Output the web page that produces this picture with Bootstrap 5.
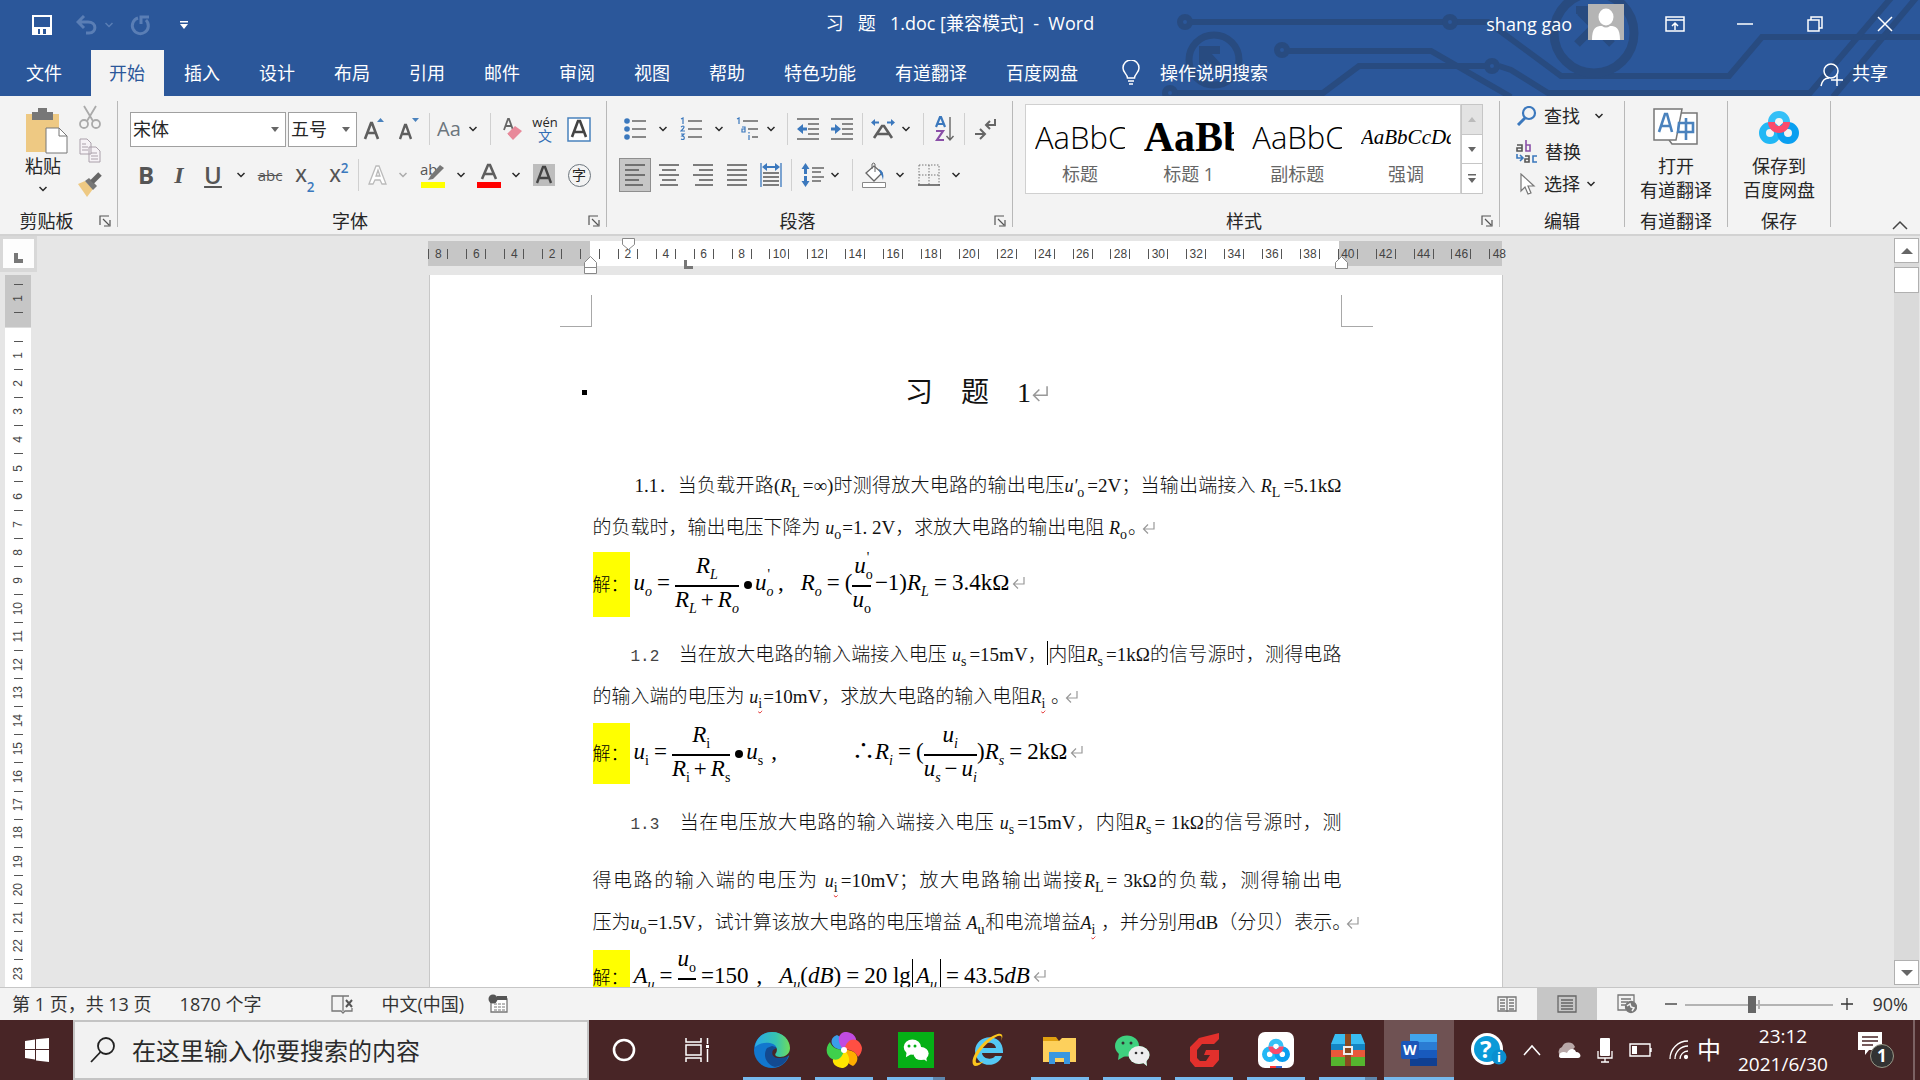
<!DOCTYPE html>
<html lang="zh-CN">
<head>
<meta charset="utf-8">
<meta name="viewport" content="width=device-width, initial-scale=1">
<title>习 题 1.doc [兼容模式] - Word</title>
<link rel="stylesheet" href="https://cdn.jsdelivr.net/npm/bootstrap@5.3.0/dist/css/bootstrap.min.css">
<style>
:root{--ui:"Open Sans","Noto Sans CJK SC",sans-serif;--blue:#2b579a;--ink:#262626}
body{font-family:var(--ui);font-size:18px;line-height:24px;color:var(--ink);background:#e6e6e6}
button,a.nav-link,select,input{font-family:inherit}
.plain{background:none;border:0;padding:0;color:inherit;display:inline-flex;align-items:center;justify-content:center}
svg{flex-shrink:0;display:block}
/* title and tabs */
.topbar{background:var(--blue);color:#fff;position:relative;height:96px}
.circuit{position:absolute;right:0;top:0;width:760px;height:96px}
.titlerow{height:50px;position:relative}
.titlerow>div{flex:1 1 0}
.qat>:first-child{margin-left:32px}
.doclabel{white-space:pre}
.winbtn{width:70px;height:48px}
.tabrow{height:46px;position:relative}
.tabrow .nav-link{color:#fff;font-size:18px;line-height:46px;padding:0 20px 0 19px;border-radius:0}
.tabrow .filetab{padding:0 29px 0 26px}
.tabrow .nav-link.active{background:#f3f3f3;color:var(--blue);padding:0 19px 0 18px;margin-right:1px}
/* ribbon */
.ribbon{height:140px;background:#f3f3f3;border-bottom:2px solid #d2d2d2;position:relative}
.vline{width:1px;background:#b8b8b8;margin:5px 0 7px}
.gfoot{height:26px;line-height:26px;margin-top:auto}
.gfoot .plain{width:24px}
.toolrow{display:grid;height:38px;align-items:center;justify-items:center}
.tick{width:1px;height:32px;background:#d0d0d0}
.g-clip{width:117px}.g-font{width:488px;padding-top:14px}.g-para{width:405px;padding-top:14px}
.g-style{width:486px}.g-edit{width:124px}.g-big{width:102px}
.pastebtn{width:78px}
.f1{margin-left:12px;grid-template-columns:158px 69px 32px 40px 1px 54px 13px 32px 32px 36px;justify-items:center}
.f2{margin:8px 0 0 12px;grid-template-columns:32px 34px 34px 22px 36px 34px 34px 5px 34px 16px 44px 12px 44px 10px 46px 24px}
.p1{margin-left:17px;grid-template-columns:22px 34px 22px 34px 22px 25px 8px 34px 34px 6px 36px 10px 25px 18px 21px 20px}
.p2{margin:8px 0 0 12px;grid-template-columns:32px 36px 32px 36px 32px 9px 32px 14px 21px 22px 30px 28px 26px}
.combo{height:35px;border:1px solid #a0a0a0;border-radius:0;padding:0 0 0 2px;font-size:18px;line-height:30px;appearance:none;color:var(--ink);background:#fff url("data:image/svg+xml,%3Csvg xmlns='http://www.w3.org/2000/svg' width='8' height='5'%3E%3Cpath d='M0 0h8L4 5z' fill='%23666'/%3E%3C/svg%3E") no-repeat right 6px center}
.combo.face{width:156px;justify-self:start}.combo.size{width:69px}
.gl{color:#555;line-height:1;font-weight:600}
.gl sub,.gl sup{color:#3b78bd}
.ital{font-family:"Liberation Serif",serif}
.struck{font-size:15px;color:#555}
.py1{font-size:13px;line-height:13px}.py2{font-size:14px;line-height:14px;color:#2f6db5}
.ringed{width:23px;height:23px;font-size:14px}
.pressed{width:32px;height:34px;background:#c6c6c6;border:1px solid #8e8e8e}
.gallery{height:90px;border:1px solid #d0d0d0;background:#fff;width:436px;padding:0 9px}
.gitem{width:90px;flex-direction:column;color:#666}
.preview{width:90px;height:50px;overflow:hidden;white-space:nowrap;color:#000;text-align:left;display:block;line-height:50px}
.pv-a{font-size:31px;font-weight:300}.pv-b{font:bold 42px/50px "Liberation Serif",serif}.pv-c{font:italic 21px/50px "Liberation Serif",serif}
.gscroll{width:22px;height:90px}.gscroll button{border:1px solid #c6c6c6;background:#fff;flex:1;margin-top:-1px}
.gscroll button:first-child{background:#e3e3e3;margin-top:0}
.editbtn{height:24px;gap:7px}
/* work area */
main{min-height:0;flex:1 1 0}
.leftcol{width:37px}
.corner{width:37px;height:36px;background:#d8d8d8;padding:3px}
.corner>div{background:#fdfdfd;width:31px;height:29px}
.vruler{width:26px;margin:3px 0 0 5px;font:12px/12px "Liberation Sans",sans-serif;color:#444}
.vr-top{background:#c6c6c6;height:53px;padding-top:9px;border-bottom:1px solid #ddd}
.vr-main{background:#fff;padding-top:13px}
.vcell{border-top:1px solid #555;width:9px;margin:0 auto;display:flex;align-items:center;justify-content:center;flex:1 1 0}
.vcell span{writing-mode:vertical-rl;transform:rotate(180deg)}
.vr-top .vcell{height:28px;flex:none}
.vr-top .vcell+.vcell{height:1px}
.sheet{width:1074px}
.hruler{height:39px;padding-top:5px;margin:0 -3px 0 -1px;position:relative}
.hband{height:25px;overflow:hidden;background:linear-gradient(90deg,#c6c6c6 0 162px,#fff 162px 911px,#c6c6c6 911px 1074px,#e6e6e6 1074px)}
.hcells{width:1099px;margin-left:-8px;height:26px;font:12px/10px "Liberation Sans",sans-serif;color:#444}
.hcells span{flex:1 1 0;display:flex;justify-content:center}
.hcells i{font-style:normal;width:20px;height:10px;border:solid #555;border-width:0 1px;text-align:center}
.stop{position:absolute}
.s-first{left:194px;top:2px}.s-left{left:156px;top:20px}.s-right{left:907px;top:20px}.s-tab{left:256px;top:24px}
.paper{background:#fff;border:1px solid #c8c8c8;border-width:0 1px;padding:0 160px 0 163px;overflow:hidden;font-family:"Liberation Serif","Noto Sans CJK SC",serif;font-size:19px;color:#111;font-weight:300}
.crops{margin:20px -31px 0 -33px}
.crop{width:32px;height:32px;border:solid #a8a8a8;border-width:0 1px 1px 0}
.crop.r{border-width:0 0 1px 1px}
.doctitle{font-size:28px;line-height:42px;margin:45px 0 51px;font-weight:400;position:relative;padding-left:20px;white-space:pre}
.doctitle::before{content:"";position:absolute;left:-11px;top:18px;width:5px;height:5px;background:#000}
.ln{margin:0;line-height:42px;height:42px;white-space:nowrap}
.jl{text-align:justify;text-align-last:justify}
.in1{padding-left:42px}.in2{padding-left:38px}
.mono{font-family:"Liberation Mono",monospace;font-size:16px;color:#444}
.ln sub,.eq sub,.eq sup{font-size:14px;font-style:normal}
.ln sub{bottom:-5px;margin-right:1px}
.jl sub{margin-right:3px}
.ln em{font-size:18px}
.ret{display:inline-block;vertical-align:-1px}
.ln .ret{margin-left:-5px}
.misspell{text-decoration:underline wavy #e02020 1px}
.caret{display:inline-block;width:1px;height:24px;background:#000;vertical-align:-4px}
.eq{font-size:23px;line-height:26px;color:#000;white-space:nowrap;font-weight:400}
.eq em{font-size:23px}
.eq sub{bottom:-6px}
.eq sub.it{font-style:italic}
.eq sup{margin-left:-6px;top:-11px}
.eqbody{gap:5px;padding:0 0 4px 4px}
.eqbody>.ret{margin-left:-2px}
.ans{background:#ff0;width:37px;font-size:18px;display:flex;align-items:center;font-weight:300}
.frac{display:flex;flex-direction:column;text-align:center}
.frac>span:first-child{border-bottom:2px solid #000;padding-bottom:6px}
.frac b{font-weight:400;margin:0 4px}
.eq1{height:65px;margin:3px 0 17px}.eq2{height:61px;margin:5px 0 18px}.eq3{height:56px;margin-top:6px}
.eqgap{width:53px}
.comma{margin:0 12px 0 3px}
.bars{border:solid #000;border-width:0 1px;padding:4px 3px;margin-left:-4px}
.bull{width:8px;height:8px;border-radius:50%;background:#000;margin:4px -2px 0 0}
.scroller{width:26px;padding:2px 2px 2px 0}
.scroller .sb{width:25px;height:25px;background:#fff;border:1px solid #b0b0b0}
.track{background:#dadada;width:25px}
.thumb{width:25px;height:26px;background:#fff;border:1px solid #b0b0b0;margin-top:4px}
/* status bar */
.status{height:33px;background:#f3f3f3;border-top:1px solid #c6c6c6;color:#333}
.viewbtn{width:60px;height:32px}
.viewbtn.on{background:#c6c6c6}
.zoomer{appearance:none;width:148px;height:17px;margin:0 8px;background:linear-gradient(#b3b3b3,#b3b3b3) 0 8px/100% 2px no-repeat,linear-gradient(#b3b3b3,#b3b3b3) 50% 4px/2px 9px no-repeat}
.zoomer::-webkit-slider-thumb{appearance:none;width:8px;height:17px;background:#666;border:0;border-radius:0}
/* taskbar */
.taskbar{height:60px;background:#482526;color:#fff}
.startbtn{width:73px}
.cortana{width:70px}.taskview{width:77px}
.tsearch{width:516px;border:2px solid #c4c4c4;background:#f2f2f2;padding-left:15px;gap:16px}
.tsearch input{border:0;background:none;font-size:24px;color:#222;outline:0;padding:0;flex:1}
.tsearch input::placeholder{color:#2b2b2b;opacity:1}
.app{width:72px;padding:0 7px}
.app>span{width:58px;height:60px;display:flex;align-items:center;justify-content:center;border-bottom:3px solid transparent;padding-top:3px}
.app.run>span{border-bottom-color:#76b9ed}
.app.multi>span{border-image:linear-gradient(90deg,#76b9ed 44px,#5e86ac 44px) 3}
.app.cur{background:#6f5253;padding:0;width:70px}
.app.cur>span{width:70px}
.clock{width:116px;font-size:19px;line-height:28px;text-align:center}
.showdesk{width:7px;border-left:2px solid #7c6263}
</style>
</head>
<body class="vh-100 d-flex flex-column overflow-hidden">
<svg width="0" height="0" class="position-absolute">
<symbol id="chev" viewBox="0 0 8 6"><path d="M.5 1 4 4.500 7.500 1" fill="none" stroke="currentColor" stroke-width="1.500"/></symbol>
<symbol id="launch" viewBox="0 0 12 12"><path d="M1 10V1h9M4 4l6 6M11 5v6H5" fill="none" stroke="#555" stroke-width="1.200"/></symbol>
<symbol id="ret" viewBox="0 0 13 14"><path d="M12 1v7H1.500M6 3.500 1.500 8 6 12.500" fill="none" stroke="#999" stroke-width="1.200"/></symbol>
<symbol id="pan" viewBox="0 0 40 34"><g fill="none" stroke-width="7"><circle cx="11" cy="23" r="7.500" stroke="#22b8f5"/><circle cx="29" cy="23" r="7.500" stroke="#0a9ff0"/><path d="M12.500 12a7.500 7.500 0 0 1 15 0" stroke="#35c0f7"/><path d="M12.500 12a7.500 7.500 0 0 0 15 0" stroke="#fb4a6b"/></g></symbol>
<symbol id="bubbles" viewBox="0 0 36 36"><ellipse cx="13" cy="14" rx="12" ry="10.500"/><path d="M5 21 4 28l7-4z"/><ellipse cx="25" cy="23" rx="10.500" ry="9"/><path d="M28 30l5 4-1-7z"/></symbol>
</svg>

<header class="topbar flex-shrink-0">
<svg class="circuit" viewBox="1160 0 760 96" fill="none" stroke="#284b80" stroke-width="6">
<circle cx="1185" cy="22" r="5"/><path d="M1191 22H1444M1457 22H1488l73 54h168l33-39H1920"/><circle cx="1450" cy="22" r="5"/>
<circle cx="1282" cy="50" r="5"/><path d="M1289 51H1431l80 46"/><circle cx="1492" cy="66" r="5"/><path d="M1176 93h147l36-27h127M1499 66l12 4 37 23h262L1891-2M1833 97 1916-2"/><circle cx="1170" cy="93" r="5"/>
<circle cx="1594" cy="33" r="40" stroke-width="9"/><circle cx="1214" cy="60" r="25" stroke-width="7"/>
<path d="M1203 65V50h17M1202 49l18 20M1576 10h25M1612 44 1580 12M1577 44l14-14" stroke-width="8"/></svg>
<div class="titlerow d-flex align-items-start">
<div class="qat d-flex align-items-center h-100">
<button class="plain" aria-label="保存"><svg width="20" height="20"><path d="M1 1h18v18H1z" fill="none" stroke="#fff" stroke-width="2"/><path d="M2 12h16v7H2z" fill="#fff"/><path d="M6 14h8v5H6z" fill="#2b579a"/><path d="M8 14h3v5H8z" fill="#fff"/></svg></button>
<button class="plain ms-4" aria-label="撤消"><svg width="21" height="20" fill="none" stroke="#5a7eb5" stroke-width="3"><path d="M8 1 2 7l6 6M2 7h10c9 0 9 11 1 11h-3"/></svg></button>
<svg width="8" height="6" class="ms-2" color="#5a7eb5"><use href="#chev"/></svg>
<button class="plain ms-3" aria-label="恢复"><svg width="22" height="22" fill="none" stroke="#5a7eb5" stroke-width="3"><path d="M9 4a8 8 0 1 0 8 2M12 10V3h8"/></svg></button>
<button class="plain ms-4 ps-1" aria-label="自定义快速访问工具栏"><svg width="10" height="10" fill="#fff"><path d="M1 1h8v1.500H1zM1 4h8L5 9z"/></svg></button>
</div>
<span class="doclabel h-100 d-flex align-items-center pb-1">习   题   1.doc [兼容模式]  -  Word</span>
<div class="d-flex justify-content-end">
<span class="pt-2 mt-1 me-3">shang gao</span>
<svg width="36" height="36" class="mt-1 me-3" viewBox="0 0 36 36"><path fill="#b4b4b4" d="M0 0h36v36H0z"/><ellipse cx="18" cy="13" rx="7.500" ry="8.500" fill="#fff"/><path d="M4 36c0-12 4-14 10-14q4 3 8 0c6 0 10 2 10 14z" fill="#fff"/></svg>
<button class="plain winbtn" aria-label="功能区显示选项"><svg width="20" height="17" fill="none" stroke="#fff" stroke-width="1.500"><path d="M1 1h18v14H1zM1 4h18M10 14V7M7 10l3-3 3 3"/></svg></button>
<button class="plain winbtn" aria-label="最小化"><svg width="16" height="4"><path d="M0 2h16" stroke="#fff" stroke-width="1.500"/></svg></button>
<button class="plain winbtn" aria-label="向下还原"><svg width="16" height="16" fill="none" stroke="#fff" stroke-width="1.500"><path d="M1 4h11v11H1zM4 4V1h11v11h-3"/></svg></button>
<button class="plain winbtn" aria-label="关闭"><svg width="16" height="16"><path d="m1 1 14 14M15 1 1 15" stroke="#fff" stroke-width="1.500"/></svg></button>
</div>
</div>
<nav class="tabrow d-flex align-items-stretch">
<ul class="nav flex-nowrap text-nowrap">
<li><a class="nav-link filetab" href="#">文件</a></li><li><a class="nav-link active" href="#">开始</a></li><li><a class="nav-link" href="#">插入</a></li><li><a class="nav-link" href="#">设计</a></li><li><a class="nav-link" href="#">布局</a></li><li><a class="nav-link" href="#">引用</a></li><li><a class="nav-link" href="#">邮件</a></li><li><a class="nav-link" href="#">审阅</a></li><li><a class="nav-link" href="#">视图</a></li><li><a class="nav-link" href="#">帮助</a></li><li><a class="nav-link" href="#">特色功能</a></li><li><a class="nav-link" href="#">有道翻译</a></li><li><a class="nav-link" href="#">百度网盘</a></li>
</ul>
<button class="plain ms-4"><svg width="18" height="26" fill="none" stroke="#fff" stroke-width="1.500" class="me-3"><path d="M5.500 18c0-4-4.500-5-4.500-10a8 8 0 0 1 16 0c0 5-4.500 6-4.500 10zM6 21h6M7 24h4"/></svg><span class="ms-1">操作说明搜索</span></button>
<button class="plain ms-auto me-4 pe-2"><svg width="24" height="24" fill="none" stroke="#fff" stroke-width="1.500" class="mt-1"><circle cx="11" cy="8" r="7"/><path d="M1 23c1-5 4-8 8-8M17 12v11M11 17h12"/></svg><span class="ms-2">共享</span></button>
</nav>
</header>

<section class="ribbon d-flex flex-shrink-0" aria-label="功能区">
<div class="g-clip d-flex flex-column">
<div class="d-flex pt-2">
<button class="plain pastebtn flex-column justify-content-start"><svg width="42" height="46" class="mt-1 ms-3" viewBox="0 0 42 46"><path d="M0 6h33v38H0z" fill="#eec983"/><path d="M6 4h6V0h9v4h6v8H6z" fill="#777"/><path d="M20 20h13l8 8v17H20z" fill="#fff" stroke="#777"/><path d="M33 20v8h8" fill="none" stroke="#777"/></svg><span class="ms-2">粘贴</span><svg width="8" height="6" class="mt-2 ms-2"><use href="#chev"/></svg></button>
<div class="d-flex flex-column gap-2">
<button class="plain" aria-label="剪切"><svg width="22" height="26" viewBox="0 0 22 26" fill="none" stroke="#aaa" stroke-width="1.800"><path d="m5 2 9 15M17 2 8 17"/><circle cx="5" cy="20" r="4"/><circle cx="17" cy="20" r="4"/></svg></button>
<button class="plain" aria-label="复制"><svg width="22" height="26" viewBox="0 0 22 26" fill="#f6f2f6" stroke="#aaa0aa"><path d="M1 1h7l4 4v11H1zM10 9h7l4 4v11H10z"/><path d="M3 6h4M3 9h6M3 12h6M12 15h6M12 18h7M12 21h7"/></svg></button>
<button class="plain" aria-label="格式刷"><svg width="24" height="26" viewBox="0 0 24 26"><path d="m0 12 7-3 8 8-6 8z" fill="#eec983"/><path d="m7 9 4-3 8 8-4 4z" fill="#777"/><path d="m14 10 8-8" stroke="#666" stroke-width="5"/></svg></button>
</div></div>
<div class="gfoot d-flex"><span class="flex-fill text-center">剪贴板</span><button class="plain" aria-label="剪贴板选项"><svg width="12" height="12"><use href="#launch"/></svg></button></div>
</div>
<div class="vline"></div>
<div class="g-font d-flex flex-column">
<div class="toolrow f1">
<select class="combo face" aria-label="字体"><option>宋体</option></select>
<select class="combo size" aria-label="字号"><option>五号</option></select>
<button class="plain gl" aria-label="增大字号"><svg width="22" height="24"><path d="m3 22 6-16h1l6 16M5 16h9" fill="none" stroke="#5e5e5e" stroke-width="2.600"/><path d="M15 5h7l-3.500-4z" fill="#4a82bd"/></svg></button>
<button class="plain gl" aria-label="减小字号"><svg width="20" height="24"><path d="m1 22 5-14h1l5 14M3 17h8" fill="none" stroke="#5e5e5e" stroke-width="2.400"/><path d="M13 1h7l-3.500 4z" fill="#4a82bd"/></svg></button>
<span class="tick"></span>
<button class="plain gap-2" aria-label="更改大小写"><span class="text-secondary fs-5">Aa</span><svg width="8" height="6"><use href="#chev"/></svg></button>
<span class="tick"></span>
<button class="plain" aria-label="清除格式"><svg width="20" height="24"><path d="m1 13 4-11h1l4 11M3 9h6" fill="none" stroke="#666" stroke-width="1.800"/><path d="m4 17 8-8 7 5-9 9z" fill="#e8899a"/><path d="m4 17 5 6" stroke="#f3f3f3"/></svg></button>
<button class="plain flex-column" aria-label="拼音指南"><span class="py1">wén</span><span class="py2">文</span></button>
<button class="plain" aria-label="字符边框"><svg width="24" height="25"><path d="M1 1h22v23H1z" fill="#fff" stroke="#4a82bd" stroke-width="1.500"/><path d="m5 20 6-16h2l6 16M8 15h8" fill="none" stroke="#444" stroke-width="2.600"/></svg></button>
</div>
<div class="toolrow f2">
<button class="plain gl fw-bold fs-4">B</button>
<button class="plain gl fs-4 fst-italic ital">I</button>
<button class="plain gl fs-4 text-decoration-underline">U</button>
<svg width="8" height="6"><use href="#chev"/></svg>
<button class="plain text-decoration-line-through struck">abc</button>
<button class="plain gl align-items-end">X<sub>2</sub></button>
<button class="plain gl">X<sup>2</sup></button>
<span class="tick"></span>
<button class="plain" aria-label="文本效果"><svg width="20" height="22"><path d="m1 20 7-18h3l7 18h-4l-2-4H7l-2 4zM8 12h4l-2-6z" fill="#fff" stroke="#bbb" stroke-width="1.300"/></svg></button>
<svg width="8" height="6" color="#aaa"><use href="#chev"/></svg>
<button class="plain flex-column" aria-label="突出显示"><svg width="26" height="26"><text x="0" y="13" font-size="15" fill="#555">ab</text><path d="m8 18 3-5 9-10 4 3-11 11z" fill="#777"/><path d="M1 20h24v6H1z" fill="#ff0"/></svg></button>
<svg width="8" height="6"><use href="#chev"/></svg>
<button class="plain" aria-label="字体颜色"><svg width="24" height="26"><path d="m5 17 6-14h2l6 14M8 12h8" fill="none" stroke="#5e5e5e" stroke-width="2.600"/><path d="M0 20h24v6H0z" fill="red"/></svg></button>
<svg width="8" height="6"><use href="#chev"/></svg>
<button class="plain" aria-label="字符底纹"><svg width="22" height="22"><path d="M0 0h22v22H0z" fill="#bdbdbd"/><path d="m4 19 6-16h2l6 16M7 14h8" fill="none" stroke="#444" stroke-width="2.400"/></svg></button>
<button class="plain rounded-circle border border-secondary ringed" aria-label="带圈字符">字</button>
</div>
<div class="gfoot d-flex"><span class="flex-fill text-center">字体</span><button class="plain" aria-label="字体选项"><svg width="12" height="12"><use href="#launch"/></svg></button></div>
</div>
<div class="vline"></div>
<div class="g-para d-flex flex-column">
<div class="toolrow p1">
<button class="plain" aria-label="项目符号"><svg width="22" height="22"><g fill="#3b78bd"><circle cx="3" cy="3" r="2.800"/><circle cx="3" cy="11" r="2.800"/><circle cx="3" cy="19" r="2.800"/></g><path d="M8 3h14M8 11h14M8 19h14" stroke="#666" stroke-width="1.300"/></svg></button>
<svg width="8" height="6"><use href="#chev"/></svg>
<button class="plain" aria-label="编号"><svg width="22" height="24"><g fill="none" stroke="#3b78bd" stroke-width="1.200"><path d="M1 2l2-1v6M1 10q3-2 3 0 0 1-3 4h4M1 17h3l-2 2q3 0 2 3-1 1-3 0"/></g><path d="M8 4h14M8 12h14M8 20h14" stroke="#666" stroke-width="1.300"/></svg></button>
<svg width="8" height="6"><use href="#chev"/></svg>
<button class="plain" aria-label="多级列表"><svg width="22" height="24"><g fill="none" stroke="#3b78bd" stroke-width="1.200"><path d="M1 2l2-1v6M6 10h3v5H6v-3h3M13 18v5M13 15v1.500"/></g><path d="M7 4h15M12 12h10M16 20h6" stroke="#666" stroke-width="1.300"/></svg></button>
<svg width="8" height="6"><use href="#chev"/></svg>
<span class="tick"></span>
<button class="plain" aria-label="减少缩进量"><svg width="22" height="22"><path d="M0 1h22M11 6h11M11 11h11M11 16h11M0 21h22" stroke="#666" stroke-width="1.300"/><path d="M0 11 6 6v3.500h4v3H6V16z" fill="#3b78bd"/></svg></button>
<button class="plain" aria-label="增加缩进量"><svg width="22" height="22"><path d="M0 1h22M11 6h11M11 11h11M11 16h11M0 21h22" stroke="#666" stroke-width="1.300"/><path d="M10 11 4 6v3.500H0v3h4V16z" fill="#3b78bd"/></svg></button>
<span class="tick"></span>
<button class="plain" aria-label="中文版式"><svg width="24" height="20"><path d="m3 19 8-12h2l8 12M6 15h12" fill="none" stroke="#5e5e5e" stroke-width="2.600"/><path d="M0 3.500 4 0v2.500h4v2H4V7zM24 3.500 20 0v2.500h-4v2h4V7z" fill="#3b78bd"/></svg></button>
<svg width="8" height="6"><use href="#chev"/></svg>
<span class="tick"></span>
<button class="plain" aria-label="排序"><svg width="20" height="26" fill="none"><path d="m1 11 4-10h1l4 10M3 8h5" stroke="#3b78bd" stroke-width="2.200"/><path d="M1 15h7L2 24h7" stroke="#8a4fa8" stroke-width="2.200"/><path d="M15 1v22M11.500 20l3.500 4 3.500-4" stroke="#666" stroke-width="1.400"/></svg></button>
<span class="tick"></span>
<button class="plain" aria-label="显示编辑标记"><svg width="21" height="22" fill="none" stroke="#666" stroke-width="2"><path d="M20 1v6h-8M15 3l-4 4 4 4M0 16h9M5 11l5 5-5 5"/></svg></button>
</div>
<div class="toolrow p2">
<button class="plain pressed" aria-label="左对齐"><svg width="20" height="22"><path d="M0 1h20M0 6h14M0 11h20M0 16h14M0 21h18" stroke="#555" stroke-width="1.300"/></svg></button>
<button class="plain" aria-label="居中"><svg width="20" height="22"><path d="M0 1h20M3 6h14M0 11h20M3 16h14M1 21h18" stroke="#555" stroke-width="1.300"/></svg></button>
<button class="plain" aria-label="右对齐"><svg width="20" height="22"><path d="M0 1h20M6 6h14M0 11h20M6 16h14M2 21h18" stroke="#555" stroke-width="1.300"/></svg></button>
<button class="plain" aria-label="两端对齐"><svg width="20" height="22"><path d="M0 1h20M0 6h20M0 11h20M0 16h20M0 21h20" stroke="#555" stroke-width="1.300"/></svg></button>
<button class="plain" aria-label="分散对齐"><svg width="22" height="24"><path d="M3 10h16M3 14h16M3 18h16M3 22h16" stroke="#555" stroke-width="1.300"/><path d="M1 0v24M21 0v24" stroke="#3b78bd" stroke-width="1.300"/><path d="m2 4 5-4v3h8V0l5 4-5 4V5H7v3z" fill="#3b78bd"/></svg></button>
<span class="tick"></span>
<button class="plain" aria-label="行距"><svg width="23" height="24"><path d="m4.500 0 4 6H6v5H3V6H.500zM4.500 24l4-6H6v-5H3v5H.500z" fill="#3b78bd"/><path d="M11 5h12M11 9h9M11 14h12M11 18h9" stroke="#666" stroke-width="1.300"/></svg></button>
<svg width="8" height="6"><use href="#chev"/></svg>
<span class="tick"></span>
<button class="plain" aria-label="底纹"><svg width="24" height="26"><path d="m4 11 8-7 8 7-8 8z" fill="#fff" stroke="#666" stroke-width="1.300"/><path d="M10 7V2q2-2 3 0v8" fill="none" stroke="#666"/><path d="M17 7q6 3 4 11-1-5-3-7z" fill="#3b78bd"/><path d="M.500 20.500h23v5H.500z" fill="#fff" stroke="#888"/></svg></button>
<svg width="8" height="6"><use href="#chev"/></svg>
<button class="plain" aria-label="边框"><svg width="22" height="22"><path d="M1 1h20v20M1 1v20M11 1v20M1 11h20" fill="none" stroke="#777" stroke-dasharray="1.500 1.500"/><path d="M0 21h22" stroke="#555" stroke-width="1.500"/></svg></button>
<svg width="8" height="6"><use href="#chev"/></svg>
</div>
<div class="gfoot d-flex"><span class="flex-fill text-center">段落</span><button class="plain" aria-label="段落选项"><svg width="12" height="12"><use href="#launch"/></svg></button></div>
</div>
<div class="vline"></div>
<div class="g-style d-flex flex-column">
<div class="d-flex pt-2 ps-2 ms-1">
<div class="gallery d-flex justify-content-between">
<button class="plain gitem"><span class="preview pv-a">AaBbC</span>标题</button>
<button class="plain gitem"><span class="preview pv-b">AaBb</span>标题 1</button>
<button class="plain gitem"><span class="preview pv-a">AaBbC</span>副标题</button>
<button class="plain gitem"><span class="preview pv-c">AaBbCcDd</span>强调</button>
</div>
<div class="gscroll d-flex flex-column">
<button class="plain" aria-label="上一行"><svg width="8" height="5"><path d="M0 5h8L4 0z" fill="#bbb"/></svg></button>
<button class="plain" aria-label="下一行"><svg width="8" height="5"><path d="M0 0h8L4 5z" fill="#666"/></svg></button>
<button class="plain" aria-label="其他"><svg width="8" height="9"><path d="M0 0h8v1.500H0zM0 4h8L4 9z" fill="#666"/></svg></button>
</div></div>
<div class="gfoot d-flex"><span class="flex-fill text-center">样式</span><button class="plain" aria-label="样式选项"><svg width="12" height="12"><use href="#launch"/></svg></button></div>
</div>
<div class="vline"></div>
<div class="g-edit d-flex flex-column">
<div class="d-flex flex-column align-items-start ps-3 pt-2 gap-2">
<button class="plain editbtn"><svg width="21" height="20" fill="none" stroke="#3b78bd" stroke-width="2.200"><circle cx="13" cy="7" r="6"/><path d="m9 12-7 7" stroke-width="3"/></svg>查找<svg width="8" height="6" class="ms-2"><use href="#chev"/></svg></button>
<button class="plain editbtn mt-1"><svg width="22" height="24" fill="none" stroke="#555" stroke-width="1.600"><path d="M1 5h5v6H1V8h5"/><path d="M10 0v11h4V5h-4" stroke="#8a4fa8"/><path d="M9 16h4v6H9v-3h4"/><path d="M21 16h-4v6h4" stroke="#3b78bd"/><path d="M1 14v4h5M4 15l3 3-3 3" stroke="#3b78bd"/></svg>替换</button>
<button class="plain editbtn"><svg width="21" height="22"><path d="M5 1v17l4-4 3 7 3-1-3-7h6z" fill="#fff" stroke="#777" stroke-width="1.200"/></svg>选择<svg width="8" height="6"><use href="#chev"/></svg></button>
</div>
<span class="gfoot text-center">编辑</span>
</div>
<div class="vline"></div>
<div class="g-big d-flex flex-column">
<button class="plain flex-column pt-2"><svg width="46" height="38" class="mt-1 mb-2" viewBox="0 0 46 38"><path d="M24 5h20v31H19l-3-4" fill="#fff" stroke="#777" stroke-width="1.500"/><path d="M1 1h28l-6 31H1z" fill="#fff" stroke="#777" stroke-width="1.500"/><path d="m6 24 6-18h2l5 18M8 18h9M26 15h14v9H25zM33 10v22" fill="none" stroke="#4a82bd" stroke-width="2.600"/></svg><span>打开<br>有道翻译</span></button>
<span class="gfoot text-center">有道翻译</span>
</div>
<div class="vline"></div>
<div class="g-big d-flex flex-column">
<button class="plain flex-column pt-2"><svg width="40" height="38" class="mt-1 mb-2"><use href="#pan"/></svg><span>保存到<br>百度网盘</span></button>
<span class="gfoot text-center">保存</span>
</div>
<div class="vline"></div>
<button class="plain ms-auto align-self-end me-2 pe-1 pb-1" aria-label="折叠功能区"><svg width="16" height="10"><path d="m1 9 7-7 7 7" fill="none" stroke="#444" stroke-width="1.500"/></svg></button>
</section>

<main class="d-flex overflow-hidden">
<div class="leftcol d-flex flex-column">
<div class="corner"><div class="d-flex align-items-center justify-content-center pt-2"><svg width="9" height="10"><path d="M0 0h4v6h5v4H0z" fill="#777"/></svg></div></div>
<div class="vruler d-flex flex-column flex-fill">
<div class="vr-top"><div class="vcell"><span>1</span></div><div class="vcell"></div></div>
<div class="vr-main d-flex flex-column flex-fill">
<div class="vcell"><span>1</span></div><div class="vcell"><span>2</span></div><div class="vcell"><span>3</span></div><div class="vcell"><span>4</span></div><div class="vcell"><span>5</span></div><div class="vcell"><span>6</span></div><div class="vcell"><span>7</span></div><div class="vcell"><span>8</span></div><div class="vcell"><span>9</span></div><div class="vcell"><span>10</span></div><div class="vcell"><span>11</span></div><div class="vcell"><span>12</span></div><div class="vcell"><span>13</span></div><div class="vcell"><span>14</span></div><div class="vcell"><span>15</span></div><div class="vcell"><span>16</span></div><div class="vcell"><span>17</span></div><div class="vcell"><span>18</span></div><div class="vcell"><span>19</span></div><div class="vcell"><span>20</span></div><div class="vcell"><span>21</span></div><div class="vcell"><span>22</span></div><div class="vcell"><span>23</span></div>
</div></div></div>
<div class="flex-fill d-flex justify-content-center">
<div class="sheet d-flex flex-column">
<div class="hruler flex-shrink-0">
<div class="hband"><div class="hcells d-flex align-items-center"><span><i>8</i></span><span><i>6</i></span><span><i>4</i></span><span><i>2</i></span><span><i></i></span><span><i>2</i></span><span><i>4</i></span><span><i>6</i></span><span><i>8</i></span><span><i>10</i></span><span><i>12</i></span><span><i>14</i></span><span><i>16</i></span><span><i>18</i></span><span><i>20</i></span><span><i>22</i></span><span><i>24</i></span><span><i>26</i></span><span><i>28</i></span><span><i>30</i></span><span><i>32</i></span><span><i>34</i></span><span><i>36</i></span><span><i>38</i></span><span><i>40</i></span><span><i>42</i></span><span><i>44</i></span><span><i>46</i></span><span><i>48</i></span></div></div>
<svg class="stop s-first" width="13" height="12"><path d="M.500.500h12v6l-6 5-6-5z" fill="#fff" stroke="#888"/></svg>
<svg class="stop s-left" width="13" height="19"><path d="M.500 6.500l6-6 6 6v11H.500zM.500 11.500h12" fill="#fff" stroke="#888"/></svg>
<svg class="stop s-right" width="13" height="13"><path d="M.500 6.500l6-6 6 6v6H.500z" fill="#fff" stroke="#888"/></svg>
<svg class="stop s-tab" width="9" height="9"><path d="M0 0h3v6h6v3H0z" fill="#777"/></svg>
</div>
<article class="paper flex-fill">
<div class="crops d-flex justify-content-between"><div class="crop"></div><div class="crop r"></div></div>
<h1 class="doctitle text-center">习　题　1<svg class="ret" width="18" height="18"><use href="#ret"/></svg></h1>
<p class="ln jl in1">1.1．当负载开路(<em>R</em><sub>L</sub>=∞)时测得放大电路的输出电压<em>u'</em><sub>o</sub>=2V；当输出端接入 <em>R</em><sub>L</sub>=5.1kΩ</p>
<p class="ln">的负载时，输出电压下降为 <em>u</em><sub>o</sub>=1. 2V，求放大电路的输出电阻 <em>R</em><sub>o</sub>。<svg class="ret" width="13" height="14"><use href="#ret"/></svg></p>
<div class="eq eq1 d-flex"><span class="ans">解：</span><div class="eqbody d-flex align-items-center">
<span><em>u</em><sub class="it">o</sub></span><span>=</span><span class="frac"><span><em>R</em><sub class="it">L</sub></span><span><em>R</em><sub class="it">L</sub><b>+</b><em>R</em><sub class="it">o</sub></span></span><span class="bull"></span><span><em>u</em><sub class="it">o</sub><sup>'</sup></span><span class="comma">,</span><span><em>R</em><sub class="it">o</sub></span><span>=</span><span class="d-flex align-items-center">(<span class="frac"><span><em>u</em><sub>o</sub><sup>'</sup></span><span><em>u</em><sub>o</sub></span></span><span class="ms-1">−1)<em>R</em><sub class="it">L</sub></span></span><span>=</span><span>3.4kΩ</span><svg class="ret" width="13" height="14"><use href="#ret"/></svg></div></div>
<p class="ln jl in2"><span class="mono">1.2</span>　当在放大电路的输入端接入电压 <em>u</em><sub>s</sub>=15mV，<span class="caret"></span>内阻<em>R</em><sub>s</sub>=1kΩ的信号源时，测得电路</p>
<p class="ln">的输入端的电压为 <em>u</em><sub class="misspell">i</sub>=10mV，求放大电路的输入电阻<em>R</em><sub class="misspell">i</sub> 。<svg class="ret" width="13" height="14"><use href="#ret"/></svg></p>
<div class="eq eq2 d-flex"><span class="ans">解：</span><div class="eqbody d-flex align-items-center">
<span><em>u</em><sub>i</sub></span><span>=</span><span class="frac"><span><em>R</em><sub>i</sub></span><span><em>R</em><sub>i</sub><b>+</b><em>R</em><sub>s</sub></span></span><span class="bull"></span><span><em>u</em><sub>s</sub></span><span class="comma">,</span><span class="eqgap"></span><span>∴<em>R</em><sub class="it">i</sub></span><span>=</span><span class="d-flex align-items-center">(<span class="frac"><span><em>u</em><sub class="it">i</sub></span><span><em>u</em><sub class="it">s</sub><b>−</b><em>u</em><sub class="it">i</sub></span></span><span>)<em>R</em><sub class="it">s</sub></span></span><span>=</span><span>2kΩ</span><svg class="ret" width="13" height="14"><use href="#ret"/></svg></div></div>
<p class="ln jl in2"><span class="mono">1.3</span>　当在电压放大电路的输入端接入电压 <em>u</em><sub>s</sub>=15mV，内阻<em>R</em><sub>s</sub>= 1kΩ的信号源时，测</p>
<p class="ln jl mt-3">得电路的输入端的电压为 <em>u</em><sub class="misspell">i</sub>=10mV；放大电路输出端接<em>R</em><sub>L</sub>= 3kΩ的负载，测得输出电</p>
<p class="ln">压为<em>u</em><sub>o</sub>=1.5V，试计算该放大电路的电压增益 <em>A</em><sub>u</sub>和电流增益<em>A</em><sub class="misspell">i</sub> ，并分别用dB（分贝）表示。<svg class="ret" width="13" height="14"><use href="#ret"/></svg></p>
<div class="eq eq3 d-flex"><span class="ans">解：</span><div class="eqbody d-flex align-items-center">
<span><em>A</em><sub class="it">u</sub></span><span>=</span><span class="frac"><span><em>u</em><sub>o</sub></span><span><em>u</em><sub>i</sub></span></span><span>=150</span><span class="comma">,</span><span><em>A</em><sub class="it">u</sub>(<em>dB</em>)</span><span>=</span><span>20 lg</span><span class="bars"><em>A</em><sub class="it">u</sub></span><span>=</span><span>43.5<em>dB</em></span><svg class="ret" width="13" height="14"><use href="#ret"/></svg></div></div>
</article>
</div></div>
<div class="scroller d-flex flex-column">
<button class="plain sb" aria-label="向上滚动"><svg width="12" height="6"><path d="M0 6h12L6 0z" fill="#666"/></svg></button>
<div class="track flex-fill"><div class="thumb"></div></div>
<button class="plain sb" aria-label="向下滚动"><svg width="12" height="6"><path d="M0 0h12L6 6z" fill="#666"/></svg></button>
</div>
</main>

<footer class="status d-flex align-items-center flex-shrink-0">
<span class="ms-2 ps-1 text-nowrap">第 1 页，共 13 页</span><span class="ms-4 ps-1 text-nowrap">1870 个字</span>
<svg class="ms-5 me-4" width="44" height="20" viewBox="-22 0 44 20" fill="none" stroke="#777" stroke-width="1.300"><path d="M12 17V2H1v15h9l2 2 2-2h7v-3M12 2h6"/><path d="m15 6 6 7M21 6l-6 7" stroke="#555" stroke-width="2"/></svg>
<span class="text-nowrap ms-1">中文(中国)</span>
<svg class="ms-4" width="22" height="20"><path d="M3 5h16v13H3z" fill="#fff" stroke="#777" stroke-width="1.300"/><path d="M9 2h10v4H9z" fill="#555"/><circle cx="5" cy="5" r="4.500" fill="#555"/><path d="M6 10h11M6 13h11M6 16h11" stroke="#777" stroke-dasharray="3 1"/></svg>
<div class="ms-auto d-flex align-items-center">
<button class="plain viewbtn" aria-label="阅读视图"><svg width="20" height="18" fill="none" stroke="#777" stroke-width="1.300"><path d="M10 2v15M10 2H1v14h9M10 2h9v14h-9M3 5h5M3 8h5M3 11h5M3 14h5M12 5h5M12 8h5M12 11h5M12 14h5"/></svg></button>
<button class="plain viewbtn on" aria-label="页面视图"><svg width="20" height="18" fill="none" stroke="#666" stroke-width="1.300"><path d="M1 1h18v16H1zM4 5h12M4 8h12M4 11h12M4 14h12"/></svg></button>
<button class="plain viewbtn" aria-label="Web 版式视图"><svg width="20" height="20" fill="none" stroke="#777" stroke-width="1.300"><path d="M17 8V1H1v15h8M4 5h10M4 8h7M4 11h5"/><circle cx="14" cy="13" r="5.500" fill="#777"/><path d="m10 12 3-2 1 3 3 1-2 3" stroke="#f3f3f3" stroke-width="1.500"/></svg></button>
<button class="plain ms-2" aria-label="缩小"><svg width="12" height="12"><path d="M0 6h12" stroke="#333" stroke-width="1.300"/></svg></button>
<input class="zoomer" type="range" min="0" max="100" value="45" aria-label="缩放">
<button class="plain" aria-label="放大"><svg width="12" height="12"><path d="M0 6h12M6 0v12" stroke="#333" stroke-width="1.300"/></svg></button>
<span class="ms-3 ps-1 me-2 pe-1">90%</span>
</div>
</footer>

<footer class="taskbar d-flex align-items-stretch flex-shrink-0">
<button class="plain startbtn" aria-label="开始"><svg width="24" height="24" fill="#fff"><path d="m0 3 10-1.500V11H0zM11 1.300 24 0v11H11zM0 12h10v9.500L0 20zM11 12h13v12l-13-1.500z"/></svg></button>
<div class="tsearch d-flex align-items-center"><svg width="26" height="26" fill="none" stroke="#222" stroke-width="1.800"><circle cx="16" cy="9" r="8"/><path d="M10.500 15 1 25"/></svg><input type="text" placeholder="在这里输入你要搜索的内容" aria-label="搜索"></div>
<button class="plain cortana" aria-label="Cortana"><svg width="24" height="24"><circle cx="12" cy="12" r="10" fill="none" stroke="#fff" stroke-width="2.600"/></svg></button>
<button class="plain taskview" aria-label="任务视图"><svg width="26" height="24" fill="none" stroke="#fff" stroke-width="1.500"><path d="M1 7h15v10H1zM1 0v4h15V0M1 24v-4h15v4M22.500 0v6M22.500 11v13"/><path d="M21 7h3v3h-3z" fill="#fff" stroke="none"/></svg></button>
<button class="plain app run" aria-label="Edge"><span><svg width="36" height="36" viewBox="0 0 36 36"><defs><linearGradient id="e1" x1="0" x2="1"><stop stop-color="#2aa9e8"/><stop offset=".6" stop-color="#36c3b0"/><stop offset="1" stop-color="#6fdc5c"/></linearGradient></defs><circle cx="18" cy="18" r="18" fill="#1277ce"/><path d="M13 16c-5 8 0 17 8 19 6-1 10-4 12-8l3-8-18-5z" fill="#134a90"/><path d="M19 18c-2 4 0 8 6 8 4 0 7-1 9-2l3-2V8z" fill="#482526"/><path d="M1 15C2 6 9 0 18 0c11 0 18 8 18 16 0 6-5 9-10 9-4 0-6-2-4-4 2-3 1-9-6-10C9 10 4 12 1 15z" fill="url(#e1)"/></svg></span></button>
<button class="plain app run" aria-label="浏览器"><span><svg width="36" height="36" viewBox="0 0 36 36"><path d="M18 18C4 18 2 6 11 3c6 3 8 9 7 15z" fill="#3a9fe8"/><path d="M18 18C8 8 14-1 21 0c7 1 10 6 9 10-5-1-9 2-12 8z" fill="#c04be0"/><path d="M18 18C22 3 34 6 36 16c0 4-2 7-4 9-3-6-8-8-14-7z" fill="#ff4f43"/><path d="M18 18c14-1 17 10 9 16-6-2-9-8-9-16z" fill="#ffae00"/><path d="M18 18c9 8 5 18-2 18-7-1-10-5-9-9 6-1 10-4 11-9z" fill="#ffe600"/><path d="M18 18c-3 14-14 11-17 3-1-4 0-8 3-11 2 6 8 8 14 8z" fill="#3fd04c"/><circle cx="18" cy="18" r="3" fill="#fff"/></svg></span></button>
<button class="plain app run multi" aria-label="企业微信"><span><svg width="36" height="36" viewBox="0 0 36 36"><path d="M0 0h36v36H0z" fill="#05b016"/><use href="#bubbles" x="4" y="5" width="28" height="26" fill="#fff"/><g fill="#05b016"><circle cx="11" cy="14" r="1.500"/><circle cx="17" cy="14" r="1.500"/></g></svg></span></button>
<button class="plain app" aria-label="Internet Explorer"><span><svg width="36" height="36" viewBox="0 0 36 36"><path d="M33 21H12c1 7 11 7 13 3h7c-4 13-26 12-27-5C6 1 34 0 33 21zM12 16h14c-1-7-13-7-14 0z" fill="#54c8f5"/><path d="M5 34c-8-3 5-25 20-31 7-3 9 0 6 6 3-8-4-6-11 0C9 18 3 30 7 31c2 0 5-1 7-2-3 3-6 5-9 5z" fill="#fbc51d"/></svg></span></button>
<button class="plain app run" aria-label="文件资源管理器"><span><svg width="34" height="30" viewBox="0 0 34 30"><path d="M0 2h13l3 4H0z" fill="#e0a010"/><path d="M0 6h16l3-3h14v24H0z" fill="#fdd05c"/><path d="M6 17h21v12h-6v-6h-9v6H6z" fill="#3a97e0"/></svg></span></button>
<button class="plain app run" aria-label="微信"><span><svg width="36" height="36"><use href="#bubbles" width="36" height="36" fill="#3fd17f"/><ellipse cx="25" cy="23" rx="10.500" ry="9" fill="#eee"/><path d="m28 30 5 4-1-7z" fill="#eee"/><g fill="#333"><circle cx="9" cy="11" r="1.500"/><circle cx="17" cy="11" r="1.500"/><circle cx="22" cy="21" r="1.300"/><circle cx="28" cy="21" r="1.300"/></g></svg></span></button>
<button class="plain app run" aria-label="G"><span><svg width="32" height="34"><path d="M31 0v6l-5 5H14l-5 6v8l3 3h6l4-6h-6l2-5h13v10l-6 7H7l-5-6V14L11 5z" fill="#e2302c"/></svg></span></button>
<button class="plain app run" aria-label="百度网盘"><span><svg width="36" height="36"><rect width="36" height="36" rx="7" fill="#fff"/><use href="#pan" x="4" y="6" width="28" height="24"/><path d="M12 34h6v2h-6z" fill="#f33"/><path d="M18 34h6v2h-6z" fill="#36c"/></svg></span></button>
<button class="plain app run multi" aria-label="WinRAR"><span><svg width="36" height="34"><path d="M5 1h26l4 10H1z" fill="#39bdf2"/><path d="M1 11h34v6H1z" fill="#1486c4"/><path d="M1 17h34v7H1z" fill="#e8583a"/><path d="M1 24h34v9H1z" fill="#55b52e"/><path d="M15 1h6v32h-6z" fill="#8a4a20"/><path d="M14 14h8v7h-8z" fill="none" stroke="#eee" stroke-width="2"/></svg></span></button>
<button class="plain app run cur" aria-label="Word"><span><svg width="36" height="32"><path d="M9 0h27v8H9z" fill="#41a5ee"/><path d="M9 8h27v8H9z" fill="#2b7cd3"/><path d="M9 16h27v8H9z" fill="#185abd"/><path d="M9 24h27v8H9z" fill="#103f91"/><rect y="7" width="18" height="18" rx="2" fill="#1b56b8"/><text x="2" y="21" font-size="14" font-weight="700" fill="#fff">W</text></svg></span></button>
<div class="ms-auto d-flex align-items-center">
<svg width="36" height="34" class="me-3"><circle cx="16" cy="16" r="16" fill="#fff"/><circle cx="16" cy="16" r="13" fill="#0a9ad8"/><text x="9" y="25" font-size="24" font-weight="700" fill="#fff">?</text><circle cx="28" cy="24" r="7.500" fill="#0a8fd0"/><text x="26" y="29" font-size="13" font-weight="700" fill="#fff">i</text></svg>
<svg width="18" height="12" class="me-3"><path d="m1 11 8-9 8 9" fill="none" stroke="#fff" stroke-width="1.500"/></svg>
<svg width="24" height="18" class="me-3"><path d="M4 15a5 5 0 0 1 1-9A7 7 0 0 1 18 6l-8 9z" fill="#b9a8a8"/><path d="M2 15c0-4 5-5 8-3 2-5 8-5 9-1 5 0 6 6 2 6H5q-3 0-3-2z" fill="#fff"/></svg>
<svg width="16" height="26" class="me-3"><rect x="3" y="1" width="10" height="18" rx="1" fill="#fff"/><path d="M1 14v7h14v-7M8 21v4M4 25h8" fill="none" stroke="#fff" stroke-width="1.300"/></svg>
<svg width="24" height="14" class="me-3"><path d="M1 1h20v12H1zM22 5v4" fill="none" stroke="#fff" stroke-width="1.400"/><path d="M3 3h5v8H3z" fill="#fff"/></svg>
<svg width="20" height="20" class="me-2" fill="none" stroke="#fff" stroke-width="1.300"><path d="M1 19A18 18 0 0 1 19 1M6 19A13 13 0 0 1 19 6M11 19a8 8 0 0 1 8-8"/><circle cx="17" cy="17" r="1.500" fill="#fff"/></svg>
<span class="fs-4">中</span>
<span class="clock ms-1 me-2">23:12<br>2021/6/30</span>
<button class="plain ms-2 me-3" aria-label="通知"><svg width="40" height="38"><path d="M1 1h24v18H12l-4 5v-5H1z" fill="#fff"/><path d="M5 6h16M5 10h16M5 14h11" stroke="#482526" stroke-width="1.300"/><circle cx="25" cy="25" r="11.500" fill="#333" stroke="#998" stroke-width="1"/><text x="20" y="31" font-size="17" font-weight="700" fill="#fff">1</text></svg></button>
<div class="showdesk h-100"></div>
</div>
</footer>
<script src="https://cdn.jsdelivr.net/npm/bootstrap@5.3.0/dist/js/bootstrap.bundle.min.js"></script>
</body>
</html>
